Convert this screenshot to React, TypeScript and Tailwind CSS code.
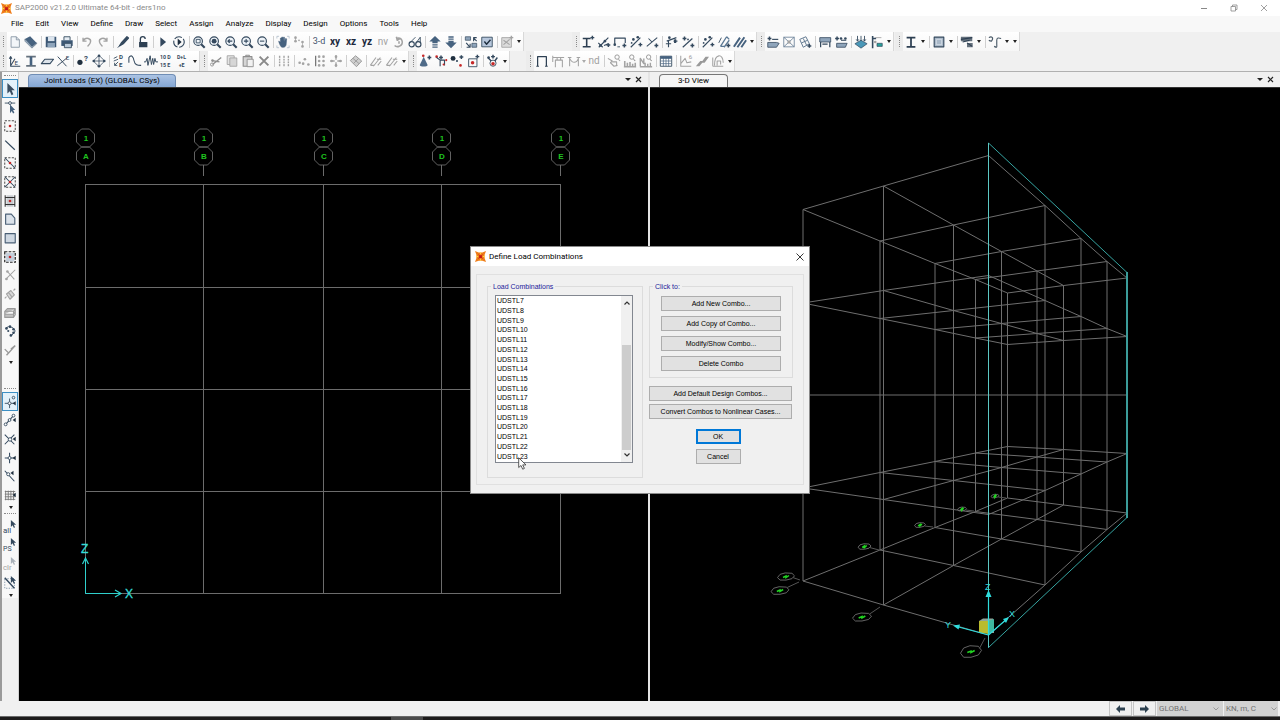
import React from 'react';

const INK = '#34495e';
const DIM = '#a3a3a3';
const RED = '#c62828';

const p = (d: string, stroke: string = INK, width = 1.2, fill = 'none') => (
  <path d={d} stroke={stroke} strokeWidth={width} fill={fill} strokeLinejoin="round" />
);

const dot = (cx: number, cy: number, fill: string = INK, r = 1.5) => <circle cx={cx} cy={cy} r={r} fill={fill} />;

const plus = (x: number, y: number, color: string = INK) => (
  <path d={`M${x - 2.2} ${y}h4.4M${x} ${y - 2.2}v4.4`} stroke={color} strokeWidth="1.7" />
);

const lens = (inner?: React.ReactNode) => (
  <>
    <circle cx="7" cy="7" r="4.9" stroke={INK} strokeWidth="1.3" fill="#eef3f8" />
    {p('M10.500 10.500l4 4', INK, 2.4)}
    {inner}
  </>
);

const hatch = (color: string) => p('M1.500 13L8 4M5 14l8-10M10 13l4-5M2 13h4M9 6h5', color, 1.2);

const pointer = <path d="M10 0v8l2-2 1.500 3 1.200-.6L13.300 5.500H16z" fill={INK} transform="translate(-1 0)" />;

const snapMark = <path d="M14.500 5.500v5L11 8z" fill="#1f2f3f" />;

const ICONS: Record<string, React.ReactNode> = {
  new: <>{p('M3.500 2h6l3.500 3.500V14H3.500z', '#8795a3', 1, '#f3f6f9')}{p('M9.500 2v3.500H13', '#8795a3', 1)}</>,
  open: <><path d="M1 4.500l6-3L14.500 9 9 13.500z" fill="#46627f" /><path d="M1 4.500V7l8 8 5.500-5V9L9 13.500z" fill="#a9bccf" stroke="#34495e" strokeWidth=".5" /></>,
  save: <><path d="M2 2h12v12H2z" fill="#3d5875" /><path d="M4.500 2H12v5H4.500z" fill="#dce5ee" /><path d="M4 9h8.500v5H4z" fill="#8fa5bb" /></>,
  print: <>{p('M4.500 6V2h7v4', INK, 1, '#e6edf4')}<path d="M1.500 6h13v6.500h-13z" fill="#3d5875" />{p('M5 9.500h8v5H5z', INK, 1, '#b9c9d9')}</>,
  undo: p('M4 6c3-4 9-2 8 2-.4 2.500-2 3.500-3.500 5M3.500 3v4h4', DIM, 1.6),
  redo: p('M12 6C9 2 3 4 4 8c.4 2.500 2 3.500 3.500 5M12.500 3v4h-4', DIM, 1.6),
  pen: <>{p('M4 12.500l2.500-4 6-6.500 1.800 1.500-6 6.500z', INK, 1.4, '#34495e')}{p('M4.500 11.500l-2.500 3', INK, 1)}</>,
  lock: <><path d="M3.500 8h9.500v6H3.500z" fill="#2d3f52" />{p('M5 8V4.500c0-3.500 5.500-3.500 5.500 0', '#2d3f52', 1.5)}</>,
  play: <path d="M5 2.500v11L11.500 8z" fill={INK} />,
  playLoop: <><circle cx="8" cy="8" r="6" fill="none" stroke={INK} strokeWidth="1.300" strokeDasharray="9 2" /><path d="M6.500 4v8l4.500-4z" fill="#1f2f3f" /></>,
  zoomBox: lens(p('M4.800 5h4.500v4H4.800z', INK, 1)),
  zoomFull: lens(dot(7, 7, INK, 2.8)),
  zoomPrev: lens(p('M4.500 7h5M6.500 5l-2 2 2 2', INK, 1.6)),
  zoomIn: lens(p('M4.500 7h5M7 4.500v5')),
  zoomOut: lens(p('M4.500 7h5')),
  pan: <><path d="M3 7l2 1V3.500h1.400V7V2.500H8V7l.4-4.500h1.300l.2 5 1-3.500 1.300.4-.5 5.600c0 2-1 3.500-2.500 4H6.500C4.500 12 3.500 9 3 7z" fill="#46627f" stroke="#46627f" strokeWidth=".6" />{p('M1 4V1.500h2.500M12.500 1.500H15V4M15 12v2.500h-2.500M3.500 14.500H1V12', '#a5b3c1', .8)}</>,
  walk: <>{dot(4, 3, DIM)}{dot(4, 7, DIM)}{dot(8, 6, DIM, 1)}{dot(12, 8, DIM)}{dot(12, 13, DIM)}{p('M4 2v6M12 7v6', DIM, .8)}</>,
  rotate: p('M5 4c6-3 10 6 3 9-2 .5-4 0-5-1M5 2l1 4 3-2M8 7v3', DIM, 1.8),
  glasses: <><circle cx="4.200" cy="10.500" r="3" fill="none" stroke={INK} strokeWidth="1.300" /><circle cx="11.800" cy="10.500" r="3" fill="none" stroke={INK} strokeWidth="1.300" />{p('M2 9l6.500-6.500M9 9.500l5-7V9', INK, 1)}</>,
  up: <path d="M8 1l6.500 6.500H11v2H5v-2H1.500zM5 10.500h6V12H5zM5 13h6v1.500H5z" fill="#46627f" />,
  down: <path d="M8 15l6.500-6.500H11v-2H5v2H1.500zM5 4h6v1.500H5zM5 1.500h6V3H5z" fill="#46627f" />,
  swap: <><path d="M1.500 2h6v4h-6z" fill="#8fa5bb" stroke={INK} strokeWidth=".8" /><path d="M9 9.500h5.500V14H9z" fill="#8fa5bb" stroke={INK} strokeWidth=".8" />{p('M14.500 7L11 3.500m0 3.500V3h3.500M2.500 9l4 4.500M7 10v4H3', INK, 1.3)}</>,
  checked: <>{p('M2 2.500h12v11H2z', INK, 1, '#b7c7dc')}{p('M5 7.500l2.500 3L12 5.500', '#1f2f3f', 1.6)}</>,
  assignOff: <>{p('M2 3h11v11H2z', DIM, 1, '#dcdcdc')}{p('M4 6l7 5M4 11l7-6', DIM)}{plus(13, 3, DIM)}</>,
  ibeamAdd: <>{p('M2 4h9M2 13.500h9M6.500 4v9.500', '#2d3f52', 1.8)}{plus(13, 3)}</>,
  frameLink: <>{p('M2 14L13 3M1.500 9l5 5M8 12l5-2', INK, 1.3)}{dot(4, 12)}{dot(9, 7)}{plus(13, 11.500)}</>,
  frameRect: <>{p('M2 11V3.500h12V9', INK, 1.3)}{dot(2, 11)}{plus(13, 12)}{p('M5 13.500h3', INK, 1)}</>,
  dotsSlash: <>{p('M2 14L13 3', INK, 1.3)}{dot(5, 5)}{dot(10, 2.5)}{plus(13, 11)}{dot(3, 9, INK, 1)}</>,
  crossSlash: <>{p('M2 13L14 3M4 4l4 4', INK, 1.2)}{plus(13, 12)}</>,
  tableAxis: <>{p('M2 7l11-4M4 6v8M11 5v4M1 10h6', INK, 1.3)}{plus(12, 7)}{dot(5, 3)}</>,
  percent: <>{p('M2 14L13 4', INK, 1.3)}{plus(4, 4)}{dot(8, 5, INK, 1)}{plus(13, 12)}</>,
  slashPad: <>{p('M4 13L11 2M8 14l6-8M4 13h4M11 2l3 3', '#5b7894', 1.5)}{p('M2 9l3-6', INK, 1)}{plus(13, 12)}</>,
  thickHatch: p('M1 13.500L8 3M5 14l8-11.500M9.500 14L15 6', '#46627f', 2.2),
  areaAdd: <><path d="M2 8.500h10l3 1-3 4.500H2z" fill="#8fa5bb" stroke={INK} strokeWidth=".9" />{plus(4, 4)}{p('M7 5h7', INK, 1.3)}</>,
  areaCross: <>{p('M2 2.500h12v11H2zM2 2.500l12 11M14 2.500l-12 11', '#607890', .9)}{dot(8, 8, DIM, 2)}</>,
  areaTilt: <>{p('M2 5l7-3 4 8-7 4zM4 9l7-3M6 4l4 8', '#607890', 1.1)}{plus(13, 12.500)}</>,
  areaTable: <><path d="M2 3h12.500v5H2z" fill="#8fa5bb" stroke={INK} strokeWidth=".9" />{p('M3 8v6M13.500 8v6M5 10.500h6', INK, 1.4)}</>,
  areaStack: <><path d="M3 9.500h12l-2 4.500H3z" fill="#8fa5bb" stroke={INK} strokeWidth=".9" />{p('M8 6h6', INK)}{plus(3.500, 4)}{dot(8, 4)}{dot(13, 4)}</>,
  loadDown: <><path d="M1 10l7-4 7 4-7 5z" fill="#4a98b8" stroke={INK} strokeWidth=".8" />{p('M4 1v6M2.500 5L4 7l1.500-2M8 1v6M12 1v6m-1.500-2L12 7l1.500-2', INK, 1)}</>,
  loadTeal: <>{p('M3 1v14M3 4h4', INK, 1.8)}{dot(6, 8, DIM)}{p('M6 3h7', DIM, 1)}<path d="M8 9.500h6V13H8z" fill="#27a39b" stroke={INK} strokeWidth=".8" /></>,
  ibeam: p('M3 3h10M3 13.500h10M8 3v10', '#2d3f52', 2),
  panel: <>{p('M2.500 2.500h11v11h-11z', INK, 1.3, '#a9b8c8')}{p('M5 5h6v6H5z', '#e4ebf2', .7)}</>,
  tendon: <><path d="M1 2h13v5H1zM8 9h6.500v5H8z" fill="#66727e" />{p('M1 5l13-2M3 8l8-2M8 9l6 4', '#2d3f52', 1.2)}</>,
  curve: p('M1 3c3-2 6 0 3 4-1 0-2 0-3-1M7 13c4 2 3 1 3-3V6c0-3 2-3 5-2', '#4a5a68', 1.3),

  axes: <>{p('M3 3v11h11M3 13.500l5-8M1.500 5.500L3 3l1.500 2.500', INK, 1.2)}<text x="7.500" y="12.500" fontSize="7" fill={INK}>E</text></>,
  ibeamShade: <>{p('M2.500 3h11M2.500 13.500h11', '#66727e', 2)}{p('M8 3v10', '#46627f', 3)}</>,
  plate: p('M1.500 11l4-5h10l-4 5z', INK, 1.2, '#dce3ea'),
  crossE: <>{p('M2 3l10 11M1.500 13.500L13 4', INK, 1.1)}<text x="11" y="7" fontSize="7" fill={INK}>E</text></>,
  query: <>{dot(4.500, 9.500, '#1f2f3f', 3)}<text x="9" y="8" fontSize="9" fontWeight="700" fill={INK}>?</text></>,
  diamond: <>{p('M8 1.500L14.500 8 8 14.500 1.500 8zM8 3v10M3 8h10', INK, .9)}{dot(8, 2)}{dot(14, 8)}{dot(8, 14)}{dot(2, 8)}</>,
  de: <><text x="8" y="6" fontSize="7" fontWeight="700" fill={INK}>D</text><text x="8" y="15" fontSize="7" fontWeight="700" fill={INK}>E</text>{p('M2 5l4-2M2 8l5-2M3 13l4-4M3 10v3h3', INK, 1)}</>,
  bell: p('M1 10V4c3-4 5-1 6 4s4 5 8 5', INK, 1.2),
  quake: p('M0 9h2l1.500-4 1 8L7 2l1.500 10L10 5l1 7 1.500-7 1 4H16', INK, 1.1),
  loads: <><text x="0" y="6" fontSize="6" fontWeight="700" fill={INK}>10 D</text><text x="0" y="15" fontSize="6" fontWeight="700" fill={INK}>15 E</text></>,
  combo: <><text x="1" y="6" fontSize="6" fontWeight="700" fill={INK}>D+L</text><text x="3" y="15" fontSize="6" fontWeight="700" fill={INK}>+E</text></>,
  cut: <>{p('M4 12L14 4M4 7.500l8 1.500', '#8f8f8f', 1.5)}<circle cx="3.500" cy="12" r="1.800" fill="none" stroke="#8f8f8f" />{dot(4, 7.500, '#8f8f8f')}</>,
  copy: <>{p('M2.500 2h8v10h-8z', DIM, 1, '#e4e4e4')}{p('M5.500 4.500h8V14h-8z', DIM, 1, '#d6d6d6')}</>,
  paste: <>{p('M2.500 3h10v11h-10z', '#8f8f8f', 1.3, '#d6d6d6')}{p('M5.500 3V1.500h4V3', '#8f8f8f')}{p('M7 6h7v8.500H7z', '#8f8f8f', 1, '#f1f1f1')}</>,
  del: p('M3 3l10 10M13 3L3 13', '#8a8a8a', 2.3),
  dotsA: <>{p('M3 2v12M8 2v12M13 2v12', DIM, 1.6)}<path d="M1 5h14M1 8h14M1 11h14" stroke="#fafafa" strokeWidth="1" /></>,
  dotsB: <>{dot(3, 10, DIM)}{dot(7, 11, DIM)}{dot(9, 6, DIM)}{dot(13, 12, DIM)}</>,
  dotsC: <>{p('M3 2v12', '#777', 1.5)}{dot(7, 3, DIM)}{dot(12, 3, DIM)}{dot(7, 8, DIM)}{dot(12, 8, DIM)}{dot(7, 13, DIM)}{dot(12, 13, DIM)}</>,
  dotsD: <>{p('M8 1.500v5M8 9.500v5M1.500 8h5M9.500 8h5', DIM, 1.5)}{dot(8, 3, DIM)}{dot(8, 13, DIM)}{dot(3, 8, DIM)}{dot(13, 8, DIM)}</>,
  mesh: <>{p('M1.500 7.500L7.500 2l7 6-6 6.500z', '#999', 1.1, '#cfcfcf')}{p('M4.500 5l7 6M11 5l-6 6', '#999', 1)}</>,
  hatchA: hatch(DIM),
  hatchB: hatch(DIM),
  cone: <>{plus(13, 4)}<path d="M6.500 3l4.500 9.500c0 2.500-9 2.500-9 0z" fill="#4f6b88" />{dot(6, 2, RED)}</>,
  jointRed: <>{dot(3, 3, RED)}{p('M3 4l4 3v7M7 7h5v6', INK, 1.3)}{plus(8, 4)}{dot(14, 7, RED, 1.2)}{dot(11, 12, RED, 1.2)}</>,
  ballRed: <>{dot(3.500, 5, '#1f2f3f', 2.8)}{dot(8, 8, INK, 1.2)}{dot(12, 13, RED)}{plus(13, 3.500)}</>,
  boxRed: <>{p('M3 5.500h9.500v9H3z', INK, 1)}{dot(7.500, 10, RED, 2)}{plus(13, 3)}</>,
  ringRed: <>{p('M2 4l4 4M13 4l-3 4', INK, 1.6)}<circle cx="8" cy="10.500" r="3.500" fill="none" stroke={INK} />{dot(8, 11, RED, 2)}{dot(3, 4)}{plus(8, 3)}</>,
  portal: p('M3 14V3h10v11M1.500 14h3M11.500 14h3', '#2d3f52', 1.4),
  portalLoad: p('M5 15V7h8v8M2 2v7M2 4h13M7 4v3M11 4v3', DIM, 1.2),
  portalBend: p('M3 14V5c3 6 8 6 10 0v9M1 4h4M11 4h4', DIM, 1.2),
  lensA: <>{p('M1 5l5 3-2 2 4 4 4-1', DIM, 1.3)}<circle cx="11.500" cy="3.500" r="2.500" fill="none" stroke="#8f8f8f" />{p('M13 6l2 2M6 9h5v4', DIM)}</>,
  lensB: <>{p('M2 14V8M5 14v-4M8 14V9M11 14v-3M14 14v-4M1 14.500h14', DIM, 1.8)}<circle cx="10" cy="3.500" r="2.500" fill="none" stroke="#8f8f8f" />{p('M12 6l2 2', '#8f8f8f')}</>,
  lensC: <>{p('M1.500 14V5l4 6V5M7 14v-4M10 14v-3M13 14v-4M1 14.500h14', DIM, 1.6)}<circle cx="11" cy="3.500" r="2.500" fill="none" stroke="#8f8f8f" />{p('M12.500 6l2 2', '#8f8f8f')}</>,
  grid: <><path d="M1.500 2.500h13V14h-13z" fill="#fff" stroke={INK} /><path d="M1.500 2.500h13v3h-13z" fill="#46627f" />{p('M2 8h12M2 11h12M5 3v11M8 3v11M11 3v11', '#46627f', .8)}</>,
  plotE: <>{p('M2 2v12h12M2 11l5-6 2 5 5-1', DIM, 1.2)}<text x="11" y="6" fontSize="7" fill="#999">6</text></>,
  slabs: <path d="M1 14l5-6h4l-5 6zM7 10l5-7h4l-5 7z" fill="#999" />,
  loop: p('M2 14V4M2 14h12M4 13c0-14 10-14 10-3M7 13V8h4v4', DIM, 1.2),

  select: <path d="M5 1v12l2.800-2.500 2 4.500 2-1-2-4.500h3.700z" fill="#3a4d60" />,
  reshape: <>{p('M2 3.500h12', INK, 1)}<circle cx="8" cy="3.500" r="1.600" fill="#fff" stroke={INK} /><path d="M8 5v10l2-2.500 1.500 3 1.500-.8-1.500-3.200H14z" fill="#46627f" /></>,
  pointBox: <><path d="M2 2h12v12H2z" fill="none" stroke="#333" strokeDasharray="2.500 1.500" />{dot(8, 8, RED)}</>,
  line: p('M2.500 3l11 10.500', INK, 1.4),
  lineBox: <><path d="M2 2h12v12H2z" fill="none" stroke="#333" strokeDasharray="2.500 1.500" />{p('M2 2l12 12')}{dot(8, 8, RED)}</>,
  crossBox: <><path d="M2 2h12v12H2z" fill="none" stroke="#333" strokeDasharray="2.500 1.500" />{p('M2 2l12 12M14 2L2 14')}{dot(8, 8, RED)}</>,
  colBox: <><path d="M4 1.500h8v13H4z" fill="#c8ccd0" />{p('M2.500 1.500v13M13.500 1.500v13M2 4h12M2 12h12', '#333', 1.2)}{dot(8, 8, RED)}</>,
  poly: p('M3 2.500h6.500L13.500 7v7H3z', '#4a5f75', 1.3, '#dbe2ea'),
  rect: p('M2.500 3h11.500v10.500H2.500z', '#4a5f75', 1.3, '#cfd8e2'),
  rectBox: <><path d="M3.500 3.500h9.500v9.500H3.500z" fill="#c3cedb" /><path d="M2 2h12v12H2z" fill="none" stroke="#222" strokeWidth="1.400" strokeDasharray="3 1.500" />{dot(8, 8, RED)}</>,
  crossOff: <>{p('M3 13L14 2M5 4l8 9', DIM)}{dot(4, 12.500, DIM)}{dot(5, 4, DIM)}</>,
  tiltOff: p('M2 13l2-2M12 4l2-2M4 8l5-4 4 5-5 5zM6 6l4 5', DIM, 1.3, '#d8d8d8'),
  solidOff: p('M2 6l3-3h9l-2 3zM2 6h10v7H2zM2 9.500h10l2-3V3M12 13l2-3V6', '#9a9a9a', 1.2, '#c2c2c2'),
  chain: <>{p('M3 5l3-2 5 1 3 4-4 5', INK, 1)}{dot(4, 5)}{dot(8, 3)}{dot(12, 6)}{dot(12, 10)}{dot(6, 8, INK, 1.2)}{dot(9, 13)}</>,
  slashOff: p('M4 14L14 3M9 7l5-4M2 7l4 4', '#999', 1.6),
  snapPoint: <>{p('M2 9.500h11M7.500 4v11', INK, 1)}<circle cx="7.500" cy="9.500" r="1.700" fill="#fff" stroke={INK} /><circle cx="12" cy="3" r="1.500" fill="none" stroke={INK} /><path d="M14.500 7v5L11 9.500z" fill="#1f2f3f" /></>,
  snapEnds: <>{p('M3 13l9-10')}<circle cx="3" cy="13" r="1.600" fill="#fff" stroke={INK} /><circle cx="7.500" cy="8" r="1.600" fill="#fff" stroke={INK} /><circle cx="12" cy="3" r="1.600" fill="#fff" stroke={INK} />{snapMark}</>,
  snapCross: <>{p('M2 3l11 11M13 3L2 14')}<circle cx="8" cy="8.500" r="2" fill="#fff" stroke={INK} />{snapMark}</>,
  snapPerp: <>{p('M2 8h11M7.500 2v12')}<circle cx="7.500" cy="8" r="1.700" fill="#fff" stroke={INK} />{snapMark}</>,
  snapLine: <>{p('M2 2l11 12')}<circle cx="6" cy="6" r="1.800" fill="#fff" stroke={INK} /><path d="M12 2v5L8.500 4.500z" fill="#1f2f3f" /></>,
  snapGrid: <>{p('M2 4h12M2 7h12M2 10h12M2 13h12M3 3v11M6 3v11M9 3v11M12 3v11', '#777', 1)}{snapMark}</>,
  all: <><text x="0" y="15" fontSize="9" fill={INK}>all</text>{pointer}</>,
  ps: <><text x="0" y="15" fontSize="8" fill={INK}>PS</text>{pointer}</>,
  clr: <><text x="0" y="15" fontSize="9" fill={DIM}>clr</text><g opacity=".4">{pointer}</g></>,
  lineSel: <><path d="M2 3h11v11H2z" fill="none" stroke="#7f93a8" strokeDasharray="1.500 1.500" />{p('M2 2l11 12', INK, 1.6)}{pointer}</>,
};

const WORDS: Record<string, string> = {
  '3-d': 'text-[9px] text-slate-600',
  xy: 'text-[10px] font-bold text-slate-800',
  xz: 'text-[10px] font-bold text-slate-800',
  yz: 'text-[10px] font-bold text-slate-800',
  nv: 'text-[10px] text-neutral-400',
  nd: 'text-[10px] text-neutral-400',
};

// '|' separator, 'v' overflow arrow, '.' disabled split arrow, anything else is a tool
const FILE_BAR = 'new open | save print | undo redo | pen | lock | play playLoop | zoomBox zoomFull zoomPrev zoomIn zoomOut | pan walk | 3-d xy xz yz nv rotate glasses | up down | swap checked | assignOff v';
const ASSIGN_BAR = 'ibeamAdd frameLink frameRect dotsSlash crossSlash | tableAxis percent | dotsSlash slashPad thickHatch v';
const AREA_BAR = 'areaAdd areaCross areaTilt | areaTable areaStack | loadDown loadTeal v';
const SECTION_BAR = 'ibeam v | panel v | tendon v | curve v v';
const DEFINE_BAR = 'axes ibeamShade plate crossE | query diamond | de bell quake loads combo v';
const EDIT_BAR = 'cut copy paste del | dotsA | dotsB dotsC dotsD | mesh | hatchA hatchB v';
const JOINT_BAR = 'cone jointRed ballRed boxRed | ringRed v';
const RESULT_BAR = 'portal portalLoad portalBend . nd | lensA lensB lensC | grid | plotE slabs loop v';

const DRAW_TOOLS = ['select', 'reshape', 'pointBox', 'line', 'lineBox', 'crossBox', 'colBox', 'poly', 'rect', 'rectBox', 'crossOff', 'tiltOff', 'solidOff', 'chain', 'slashOff'];
const SNAP_TOOLS = ['snapPoint', 'snapEnds', 'snapCross', 'snapPerp', 'snapLine', 'snapGrid'];
const SELECT_TOOLS = ['all', 'ps', 'clr', 'lineSel'];

const MENUS = ['File', 'Edit', 'View', 'Define', 'Draw', 'Select', 'Assign', 'Analyze', 'Display', 'Design', 'Options', 'Tools', 'Help'];

const COMBOS = Array.from({ length: 17 }, (_, i) => `UDSTL${i + 7}`);

const Glyph: React.FC<{ name: string }> = ({ name }) => (
  <svg viewBox="0 0 16 16" className="size-[14px] shrink-0 overflow-visible" fill="none" aria-hidden="true">
    {ICONS[name]}
  </svg>
);

const Caret: React.FC<{ color?: string }> = ({ color = '#222' }) => (
  <svg viewBox="0 0 4 3" className="h-[3px] w-1"><path d="M0 0h4L2 3z" fill={color} /></svg>
);

const ToolBar: React.FC<{ items: string; label: string; className?: string }> = ({ items, label, className = '' }) => (
  <div role="toolbar" aria-label={label} className={`flex h-full items-center border-r border-[#d8d8d8] bg-linear-to-b from-white to-[#f6f6f6] ${className}`}>
    <span className="flex w-2 justify-center self-stretch bg-[#ececec] py-1">
      <span className="border-l border-dotted border-[#8a8a8a]" />
    </span>
    {items.split(' ').map((item, i) => {
      if (item === '|') return <span key={i} className="flex h-3 w-1 justify-center"><span className="w-px bg-[#cfcfcf]" /></span>;
      if (item === '.') return <span key={i} className="flex w-1"><Caret color="#aaa" /></span>;
      if (item === 'v') return (
        <button key={i} type="button" aria-label="More" className="flex w-2 justify-center">
          <Caret />
        </button>
      );
      return (
        <button key={i} type="button" aria-label={item} className={`flex h-4 w-4 items-center justify-center whitespace-nowrap leading-none ${WORDS[item] ?? ''}`}>
          {WORDS[item] ? item : <Glyph name={item} />}
        </button>
      );
    })}
  </div>
);

const SideTools: React.FC<{ tools: string[]; label: string; className?: string }> = ({ tools, label, className = '' }) => (
  <div role="toolbar" aria-orientation="vertical" aria-label={label} className={`flex flex-col items-center bg-[#f8f8f8] ${className}`}>
    <span className="flex h-[7px] w-full items-center px-0.5"><span className="w-full border-t border-dotted border-[#8a8a8a]" /></span>
    {tools.map((tool) => (
      <button
        key={tool}
        type="button"
        aria-label={tool}
        className={`flex h-[19px] w-4 items-center justify-center nth-[3n]:h-[18px] ${tool === 'select' || tool === 'snapPoint' ? 'border border-[#3c8fc4] bg-[#e3f1fa]' : ''}`}
      >
        <Glyph name={tool} />
      </button>
    ))}
    <button type="button" aria-label="More" className="flex h-[6px] w-full items-center justify-end pr-[5px]">
      <Caret />
    </button>
  </div>
);

const AppLogo: React.FC = () => (
  <svg viewBox="0 0 12 12" className="size-[11px]" aria-hidden="true">
    <path d="M0 0l4 1.500h4L12 0l-1.500 4v4L12 12l-4-1.500H4L0 12l1.500-4V4z" fill="#ef7d1a" />
    <path d="M3 3l2 1.500h2L9 3 7.500 5v2L9 9 7 7.500H5L3 9l1.500-2V5z" fill="#c4161c" />
    <path d="M5 1.500h2L6 4zM5 10.500h2L6 8zM1.500 5v2L4 6zM10.500 5v2L8 6z" fill="#ffd94a" />
  </svg>
);

const PaneHeader: React.FC<{ title: string; active?: boolean }> = ({ title, active }) => (
  <div className="flex h-4 shrink-0 items-end justify-between border-b border-[#333] bg-[#f0f0f0] pl-[9px]">
    <div
      className={`flex h-[13px] items-center justify-center rounded-t-sm border border-b-0 text-[8px] leading-none text-black ${
        active ? 'w-[148px] border-[#6f8db5] bg-linear-to-b from-[#abc3e4] to-[#84a6d3]' : 'w-[69px] border-[#777] bg-[#f6f6f6]'
      }`}
    >
      {title}
    </div>
    <div className="flex h-full items-center gap-1 pr-1.5">
      <button type="button" aria-label="Window list"><svg viewBox="0 0 6 3" className="h-[3px] w-1.5"><path d="M0 0h6L3 3z" fill="#222" /></svg></button>
      <button type="button" aria-label="Close view"><svg viewBox="0 0 7 7" className="size-[7px]"><path d="M1 1l5 5M6 1L1 6" stroke="#222" strokeWidth="1.200" /></svg></button>
    </div>
  </div>
);

const GRID_X = [85, 203, 323, 441, 560];
const GRID_Y = [184, 287, 389, 491, 593];

const octagon = (cx: number, cy: number) => `M${cx - 4} ${cy - 9}h8l5 5v8l-5 5h-8l-5-5v-8z`;

const PlanView: React.FC = () => (
  <svg viewBox="19 88 629 613" className="block min-h-0 w-full flex-1 bg-black" role="img" aria-label="Joint loads elevation" fontFamily="'Liberation Sans', sans-serif">
    <g stroke="#6c6c6c" fill="none">
      {GRID_X.map((x, i) => (
        <g key={x}>
          <path d={`M${x + 0.5} 184V594`} />
          <path d={octagon(x + 0.5, 138)} strokeWidth=".9" />
          <path d={octagon(x + 0.5, 156)} strokeWidth=".9" />
          <path d={`M${x + 0.5} 165v11`} />
          <g stroke="none" fill="#1fc41f" fontSize="8" fontWeight="700" textAnchor="middle">
            <text x={x + 1} y="141">1</text>
            <text x={x + 1} y="159">{'ABCDE'[i]}</text>
          </g>
        </g>
      ))}
      {GRID_Y.map((y) => <path key={y} d={`M85 ${y + 0.5}H561`} />)}
    </g>
    <g stroke="#2fd0cc" fill="none">
      <path d="M85.500 557V593.500H121" />
      <path d="M82.500 564l3-6 3 6M115 590l6 3.500-6 3.500" strokeWidth="1.200" />
    </g>
    <g fill="#35dcd8" stroke="#35dcd8" strokeWidth=".3" fontSize="12">
      <text x="81" y="553">Z</text>
      <text x="125" y="598">X</text>
    </g>
  </svg>
);

// screen x of the five frames along each of the three grid lines
const NEAR_X = [988.5, 1045, 1081, 1107, 1127];
const MID_X = [883.5, 953.5, 1001.5, 1037, 1063.5];
const FAR_X = [803, 880, 935, 975.5, 1007.5];

const LEVELS = [
  { near: [155.5, 205.5, 238.5, 261.5, 278], mid: [186, 225, 251.5, 271, 285.5], far: [209.5, 241, 263.5, 279.5, 293] },
  { near: [275.5, 300.5, 316.5, 328.5, 336.5], mid: [290.5, 310.5, 323.5, 333.5, 340.5], far: [303, 318.5, 329.5, 338, 344.5] },
  { near: [514.5, 490.5, 474, 462, 453.5], mid: [499.5, 480.5, 467.5, 457, 449.5], far: [488, 472.5, 461.5, 453, 446.5] },
  { near: [635, 585, 552, 529.5, 513], mid: [605, 565.5, 539, 519.5, 505], far: [581, 550, 527.5, 511.5, 498] },
];

const points = (xs: number[], ys: number[]) => xs.map((x, i) => `${x},${ys[i]}`).join(' ');

const BUBBLES = [
  { x: 995, y: 496, r: 4, to: [1006, 498] },
  { x: 962, y: 509, r: 4.5, to: [974, 511] },
  { x: 920, y: 525, r: 5.5, to: [933, 527] },
  { x: 864.5, y: 546.5, r: 6.5, to: [879, 550] },
  { x: 786, y: 576.5, r: 8.5, to: [800, 580] },
  { x: 780, y: 590.5, r: 9, to: [799, 582] },
  { x: 862, y: 617, r: 9.5, to: [880, 607] },
  { x: 971, y: 651.5, r: 10.5, to: [985, 638] },
];

// flattened octagon, as the grid bubble looks lying on the base plane
const flatBubble = (x: number, y: number, r: number) => {
  const h = r > 10 ? r * 0.55 : r * 0.42;
  return `M${x - r} ${y + h * 0.3}L${x - r * 0.7} ${y - h * 0.6}L${x - r * 0.1} ${y - h}L${x + r * 0.7} ${y - h * 0.9}L${x + r} ${y - h * 0.2}L${x + r * 0.7} ${y + h * 0.6}L${x} ${y + h}L${x - r * 0.7} ${y + h}z`;
};

const SpaceView: React.FC = () => {
  const top = LEVELS[0];
  const base = LEVELS[3];
  return (
    <svg viewBox="650 88 630 613" className="block min-h-0 w-full flex-1 bg-black" role="img" aria-label="3-D frame view" fontFamily="'Liberation Sans', sans-serif">
      <g stroke="#6e6e6e" fill="none" strokeWidth="1">
        {LEVELS.map((level, n) => (
          <g key={n}>
            <polyline points={points(NEAR_X, level.near)} />
            <polyline points={points(MID_X, level.mid)} />
            <polyline points={points(FAR_X, level.far)} />
            {NEAR_X.map((x, i) => (
              <polyline key={x} points={`${x},${level.near[i]} ${MID_X[i]},${level.mid[i]} ${FAR_X[i]},${level.far[i]}`} />
            ))}
          </g>
        ))}
        <path d="M803 395H1127" />
        {NEAR_X.map((x, i) => (
          <path key={x} d={`M${x} ${top.near[i]}V${base.near[i]}M${MID_X[i]} ${top.mid[i]}V${base.mid[i]}M${FAR_X[i]} ${top.far[i]}V${base.far[i]}`} />
        ))}
        {BUBBLES.map((b) => (
          <g key={b.x}>
            <path d={flatBubble(b.x, b.y, b.r)} strokeWidth=".9" />
            <path d={`M${b.x + b.r * 0.8} ${b.y + (b.to[1] > b.y ? 1 : -3)}L${b.to[0]} ${b.to[1]}`} stroke="#555" />
            <path d={`M${b.x - b.r * 0.35} ${b.y + 1}l${b.r * 0.35} -1.500v1.500l${b.r * 0.35} -2`} stroke="#22d422" strokeWidth="1.500" />
          </g>
        ))}
      </g>
      <path d="M988.500 143L1127 272.500V517.500L988.500 647.500z" fill="none" stroke="#35a3a0" />
      <path d="M988.500 143V647.500" stroke="#5cc8c4" />
      <path d="M1127 272V518" stroke="#3b9c9a" strokeWidth="2" />
      <path d="M979 621l4-2.500h10l1 2.500v12h-15z" fill="#8fa39a" />
      <path d="M979 621h9v13l-9-2z" fill="#b9bb2e" />
      <path d="M988 621l6-2v11l-6 5z" fill="#3fb8a0" />
      <g stroke="#2fdcdc" fill="none" strokeWidth="1.200">
        <path d="M988.500 635L955 626M988.500 635L1008 618M988.500 635V592" />
      </g>
      <path d="M953 625.500l7-1-1.500 5zM1009 617l-6 2 3 4zM988.500 590l-3 7h6z" fill="#2fdcdc" />
      <g fill="#2fdcdc" fontSize="9">
        <text x="985" y="590">Z</text>
        <text x="945" y="628">Y</text>
        <text x="1009" y="617">X</text>
      </g>
    </svg>
  );
};

const PushButton: React.FC<{ className?: string; children: React.ReactNode }> = ({ className = 'border border-[#adadad]', children }) => (
  <button type="button" className={`flex h-[15px] items-center justify-center bg-[#e1e1e1] text-[7px] leading-none text-black ${className}`}>
    {children}
  </button>
);

const Group: React.FC<{ title: string; className: string; children: React.ReactNode }> = ({ title, className, children }) => (
  <div role="group" aria-label={title} className={`relative border border-[#dcdcdc] ${className}`}>
    <span className="absolute -top-[6px] left-[3px] bg-[#f0f0f0] px-0.5 text-[7px] leading-[11px] text-[#1a1a9a]">{title}</span>
    {children}
  </div>
);

const ComboDialog: React.FC = () => (
  <div className="absolute inset-0 flex items-center justify-center pt-5">
    <div role="dialog" aria-labelledby="combo-title" className="w-[340px] border border-[#8a8a8a] bg-[#f0f0f0] font-['Liberation_Sans',sans-serif]">
      <div className="flex h-[19px] items-center bg-white pr-[5px] pl-1">
        <AppLogo />
        <h2 id="combo-title" className="ml-[3px] flex-1 font-[Roboto,'Open_Sans',sans-serif] text-[8px] text-black">Define Load Combinations</h2>
        <button type="button" aria-label="Close">
          <svg viewBox="0 0 8 8" className="size-2"><path d="M.5.5l7 7M7.500.5l-7 7" stroke="#222" strokeWidth=".9" /></svg>
        </button>
      </div>
      <div className="px-[5px] pt-2 pb-2">
        <div className="flex items-start gap-1.5 border border-[#e0e0e0] px-2.5 pt-[11px] pb-1.5">
          <Group title="Load Combinations" className="h-[192px] w-[156px] px-[7px] pt-2">
            <div className="flex h-[168px] w-[138px] border border-[#828790] bg-white">
              <ul role="listbox" aria-label="Load Combinations" className="flex flex-1 flex-col pb-px pl-px">
                {COMBOS.map((name) => (
                  <li key={name} role="option" aria-selected="false" className="flex flex-1 items-center text-[7px] leading-none text-black">{name}</li>
                ))}
              </ul>
              <div className="flex w-[11px] flex-col items-center justify-between bg-[#f0f0f0] py-[5px]">
                <svg viewBox="0 0 6 4" className="h-1 w-1.5" fill="none"><path d="M.5 3.500L3 1l2.500 2.500" stroke="#333" strokeWidth="1.200" /></svg>
                <div className="mt-9 h-[105px] w-[9px] bg-[#cdcdcd]" />
                <svg viewBox="0 0 6 4" className="h-1 w-1.5" fill="none"><path d="M.5.5L3 3 5.500.5" stroke="#333" strokeWidth="1.200" /></svg>
              </div>
            </div>
          </Group>
          <div className="flex w-[144px] flex-col">
            <Group title="Click to:" className="flex h-[92px] flex-col gap-[5px] px-[11px] pt-[9px]">
              <PushButton>Add New Combo...</PushButton>
              <PushButton>Add Copy of Combo...</PushButton>
              <PushButton>Modify/Show Combo...</PushButton>
              <PushButton>Delete Combo</PushButton>
            </Group>
            <div className="mt-2 flex flex-col gap-[3px] pr-px">
              <PushButton>Add Default Design Combos...</PushButton>
              <PushButton>Convert Combos to Nonlinear Cases...</PushButton>
            </div>
            <div className="mt-2.5 flex flex-col items-center gap-[5px] pr-1.5">
              <PushButton className="w-[45px] border-2 border-[#0078d7]">OK</PushButton>
              <PushButton className="w-[45px] border border-[#adadad]">Cancel</PushButton>
            </div>
          </div>
        </div>
      </div>
      <svg viewBox="0 0 9 13" className="absolute top-[457px] left-[518px] h-[13px] w-[9px]" aria-hidden="true">
        <path d="M.7.800v9.700L3 8.500l1.700 3.700 1.700-.8-1.700-3.500H8z" fill="#fff" stroke="#333" strokeWidth=".8" />
      </svg>
    </div>
  </div>
);

const App: React.FC = () => (
  <div className="relative flex h-screen flex-col overflow-hidden bg-[#f0f0f0] font-[Roboto,'Open_Sans',sans-serif]">
    <header className="flex h-4 shrink-0 items-center bg-white pr-3 pl-px">
      <AppLogo />
      <h1 className="ml-[3px] flex-1 text-[8px] text-[#8a8a8a]">SAP2000 v21.2.0 Ultimate 64-bit - ders1no</h1>
      <div className="flex items-center gap-[22px]">
        <button type="button" aria-label="Minimize"><svg viewBox="0 0 8 8" className="size-2"><path d="M1 4.500h6" stroke="#888" /></svg></button>
        <button type="button" aria-label="Restore"><svg viewBox="0 0 8 8" className="size-2" fill="none"><path d="M1 2.500h4.500V7H1zM2.500 2.500V1H7v4.500H5.500" stroke="#888" strokeWidth=".8" /></svg></button>
        <button type="button" aria-label="Close"><svg viewBox="0 0 8 8" className="size-2"><path d="M1 1l6 6M7 1L1 7" stroke="#888" strokeWidth=".8" /></svg></button>
      </div>
    </header>
    <nav className="flex h-4 shrink-0 items-center gap-3 bg-[#f8f8f8] pl-[11px] text-[8px] leading-none text-black">
      {MENUS.map((menu) => <button key={menu} type="button">{menu}</button>)}
    </nav>
    <div className="flex h-[19px] shrink-0">
      <ToolBar items={FILE_BAR} label="File and view" className="mr-12 -ml-px" />
      <ToolBar items={ASSIGN_BAR} label="Assign frame" />
      <ToolBar items={AREA_BAR} label="Assign area" className="mr-px" />
      <ToolBar items={SECTION_BAR} label="Sections" />
    </div>
    <div className="flex h-[21px] shrink-0 border-b border-[#b0b0b0]">
      <ToolBar items={DEFINE_BAR} label="Define" className="-ml-px" />
      <ToolBar items={EDIT_BAR} label="Edit" />
      <ToolBar items={JOINT_BAR} label="Joints" className="mr-4" />
      <ToolBar items={RESULT_BAR} label="Results" />
    </div>
    <main className="flex min-h-0 flex-1">
      <aside className="flex w-[19px] shrink-0 flex-col border-r border-l-2 border-r-[#d0d0d0] border-l-[#9a9a9a]">
        <SideTools tools={DRAW_TOOLS} label="Draw" className="pb-5" />
        <SideTools tools={SNAP_TOOLS} label="Snap" />
        <SideTools tools={SELECT_TOOLS} label="Select" />
      </aside>
      <section className="flex min-w-0 flex-[629] flex-col">
        <PaneHeader title="Joint Loads (EX) (GLOBAL CSys)" active />
        <PlanView />
      </section>
      <div className="w-0.5 shrink-0 bg-[#e4e4e4]" />
      <section className="flex min-w-0 flex-[630] flex-col">
        <PaneHeader title="3-D View" />
        <SpaceView />
      </section>
    </main>
    <footer className="flex h-[15px] shrink-0 items-stretch justify-end gap-px bg-[#f0f0f0] pr-0.5 text-[8px] text-neutral-500">
      <button type="button" aria-label="Previous" className="flex w-[23px] items-center justify-center border border-[#c4c4c4]">
        <svg viewBox="0 0 9 8" className="h-2 w-[9px]"><path d="M0 4l4-4v2.500h5v3H4V8z" fill="#2d4150" /></svg>
      </button>
      <button type="button" aria-label="Next" className="flex w-[23px] items-center justify-center border border-[#c4c4c4]">
        <svg viewBox="0 0 9 8" className="h-2 w-[9px]"><path d="M9 4L5 0v2.500H0v3h5V8z" fill="#2d4150" /></svg>
      </button>
      <div className="flex w-[66px] items-center bg-[#d2d2d2] pr-1">
        <select aria-label="Coordinate system" className="min-w-0 flex-1 appearance-none px-0.5 text-neutral-500"><option>GLOBAL</option></select>
        <svg viewBox="0 0 6 4" className="h-1 w-1.5" fill="none"><path d="M.5.5L3 3 5.500.5" stroke="#999" /></svg>
      </div>
      <div className="flex w-[54px] items-center bg-[#d2d2d2] pr-px">
        <select aria-label="Units" className="min-w-0 flex-1 appearance-none px-0.5 text-neutral-500"><option>KN, m, C</option></select>
        <svg viewBox="0 0 6 4" className="h-1 w-1.5" fill="none"><path d="M.5.5L3 3 5.500.5" stroke="#999" /></svg>
      </div>
    </footer>
    <div className="h-1 shrink-0 border-t border-[#6a6a6a] bg-[#1c1a1a] pl-[391px]">
      <div className="h-full w-8 bg-[#4a4a4a]" />
    </div>
    <ComboDialog />
  </div>
);

export default App;
